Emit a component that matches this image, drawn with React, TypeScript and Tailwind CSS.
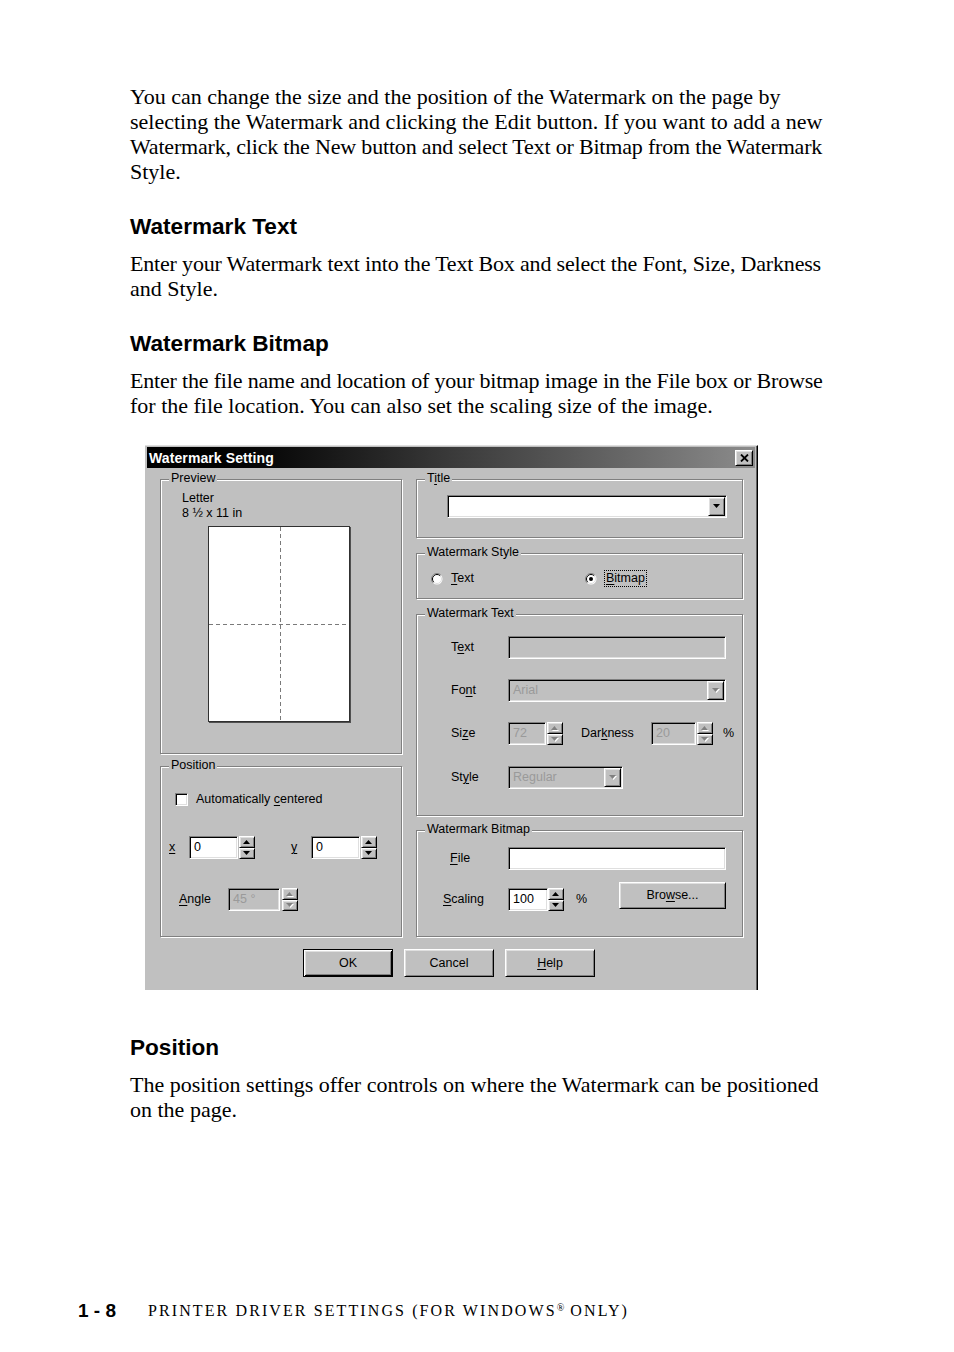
import React from "react";

const SERIF = "font-['Liberation_Serif','Times_New_Roman',serif]";
const SANS = "font-['Liberation_Sans',Arial,sans-serif]";

const sunkenCls =
  "border border-t-[#808080] border-l-[#808080] border-b-white border-r-white shadow-[inset_1px_1px_0_#000,inset_-1px_-1px_0_#dfdfdf]";
const raisedCls =
  "bg-[#c0c0c0] border border-t-white border-l-white border-b-black border-r-black shadow-[inset_1px_1px_0_#dfdfdf,inset_-1px_-1px_0_#808080]";

function U({ children }: { children: React.ReactNode }) {
  return <span className="underline underline-offset-[2px] decoration-1">{children}</span>;
}

function ArrowDown({ disabled }: { disabled?: boolean }) {
  return (
    <svg width="8" height="5" viewBox="0 0 8 5" className="block">
      {disabled && <polygon points="1,1 8,1 4.5,5" fill="#ffffff" />}
      <polygon points="0,0 7,0 3.5,4" fill={disabled ? "#808080" : "#000000"} />
    </svg>
  );
}

function ArrowUp({ disabled }: { disabled?: boolean }) {
  return (
    <svg width="8" height="5" viewBox="0 0 8 5" className="block">
      {disabled && <polygon points="1,5 8,5 4.5,1" fill="#ffffff" />}
      <polygon points="0,4 7,4 3.5,0" fill={disabled ? "#808080" : "#000000"} />
    </svg>
  );
}

function Edit({ wCls, value, disabled }: { wCls: string; value?: string; disabled?: boolean }) {
  return (
    <div
      className={`${wCls} h-[23px] flex items-center pl-[4px] ${sunkenCls} ${
        disabled ? "bg-[#c0c0c0] text-[#9a9a9a]" : "bg-white text-black"
      }`}
    >
      {value}
    </div>
  );
}

function Combo({ wCls, value, disabled }: { wCls: string; value?: string; disabled?: boolean }) {
  return (
    <div className={`${wCls} h-[23px] flex p-[1px] ${sunkenCls} ${disabled ? "bg-[#c0c0c0]" : "bg-white"}`}>
      <div className={`flex-1 flex items-center pl-[3px] ${disabled ? "text-[#9a9a9a]" : "text-black"}`}>{value}</div>
      <div className={`w-[17px] flex items-center justify-center ${raisedCls}`}>
        <ArrowDown disabled={disabled} />
      </div>
    </div>
  );
}

function Spin({ disabled }: { disabled?: boolean }) {
  return (
    <div className="w-[16px] h-[23px] flex flex-col">
      <div className={`h-[12px] flex items-center justify-center ${raisedCls}`}>
        <ArrowUp disabled={disabled} />
      </div>
      <div className={`h-[11px] flex items-center justify-center ${raisedCls}`}>
        <ArrowDown disabled={disabled} />
      </div>
    </div>
  );
}

function Btn({ wCls, hCls, children, def }: { wCls: string; hCls: string; children: React.ReactNode; def?: boolean }) {
  const cls = def
    ? "bg-[#c0c0c0] border border-black shadow-[inset_1px_1px_0_#fff,inset_-1px_-1px_0_#000,inset_2px_2px_0_#dfdfdf,inset_-2px_-2px_0_#808080]"
    : raisedCls;
  return <div className={`${wCls} ${hCls} flex items-center justify-center ${cls}`}>{children}</div>;
}

function Check() {
  return <div className={`w-[13px] h-[13px] bg-white ${sunkenCls}`} />;
}

function Radio({ checked }: { checked?: boolean }) {
  return (
    <svg width="12" height="12" viewBox="0 0 12 12" className="block">
      <circle cx="6" cy="6" r="5.5" fill="#ffffff" />
      <path d="M 2.1 9.9 A 5.5 5.5 0 0 1 9.9 2.1" fill="none" stroke="#808080" strokeWidth="1" />
      <circle cx="6" cy="6" r="4.5" fill="#ffffff" />
      <path d="M 2.8 9.2 A 4.5 4.5 0 0 1 9.2 2.8" fill="none" stroke="#000000" strokeWidth="1" />
      <path d="M 2.8 9.2 A 4.5 4.5 0 0 0 9.2 2.8" fill="none" stroke="#dfdfdf" strokeWidth="1" />
      {checked && <circle cx="6" cy="6" r="2" fill="#000000" />}
    </svg>
  );
}

function Group({ label, cls, children }: { label: React.ReactNode; cls: string; children?: React.ReactNode }) {
  return (
    <div className={`relative border border-[#808080] shadow-[1px_1px_0_#fff,inset_1px_1px_0_#fff] ${cls}`}>
      <span className="absolute left-[8px] top-[-9px] px-[2px] bg-[#c0c0c0] leading-[15px] whitespace-nowrap">
        {label}
      </span>
      {children}
    </div>
  );
}

function Row({ label, lwCls, children }: { label: React.ReactNode; lwCls: string; children: React.ReactNode }) {
  return (
    <div className="flex items-center h-[23px]">
      <span className={lwCls}>{label}</span>
      {children}
    </div>
  );
}

function Dialog() {
  return (
    <div
      className={`${SANS} text-[12.5px] leading-[15px] text-black w-[613px] h-[545px] bg-[#c0c0c0] border-t border-t-[#dfdfdf] border-r border-r-black shadow-[inset_-1px_0_0_#606060] pt-[1px]`}
    >
      {/* title bar */}
      <div className="ml-[2px] mr-[2px] h-[21px] bg-linear-to-r from-black via-[#3a3a3a] to-[#8c8c8c] flex items-center justify-between pl-[2px]">
        <span className="text-white font-bold text-[14px] leading-[16px] tracking-[0.1px]">Watermark Setting</span>
        <div className={`w-[18px] h-[16px] mr-[2px] flex items-center justify-center ${raisedCls}`}>
          <svg width="9" height="8" viewBox="0 0 9 8" className="block">
            <path d="M1 0.5 L8 7.5 M8 0.5 L1 7.5" stroke="#000" strokeWidth="1.8" />
          </svg>
        </div>
      </div>

      {/* body */}
      <div className="flex gap-[14px] pl-[15px] mt-[11px]">
        {/* left column */}
        <div className="flex flex-col">
          <Group label="Preview" cls="w-[242px] h-[275px]">
            <div className="pl-[21px] pt-[11px]">
              <div>Letter</div>
              <div>8 ½ x 11 in</div>
            </div>
            <div className="ml-[47px] mt-[5px] w-[142px] h-[196px] bg-white border border-[#303030] shadow-[1px_1px_0_#505050]">
              <svg width="140" height="194" viewBox="0 0 140 194" className="block">
                <line x1="71.5" y1="0" x2="71.5" y2="194" stroke="#7a7a7a" strokeWidth="1" strokeDasharray="4 3" />
                <line x1="0" y1="97.5" x2="140" y2="97.5" stroke="#7a7a7a" strokeWidth="1" strokeDasharray="4 3" />
              </svg>
            </div>
          </Group>

          <Group label="Position" cls="w-[242px] h-[171px] mt-[12px]">
            <div className="pl-[14px] pt-[25px] flex items-center">
              <Check />
              <span className="ml-[8px]">
                Automatically <U>c</U>entered
              </span>
            </div>
            <div className="flex items-center mt-[29px] pl-[8px]">
              <span className="w-[20px]">
                <U>x</U>
              </span>
              <Edit wCls="w-[49px]" value="0" />
              <div className="ml-[1px]">
                <Spin />
              </div>
              <span className="ml-[36px] w-[20px]">
                <U>y</U>
              </span>
              <Edit wCls="w-[49px]" value="0" />
              <div className="ml-[1px]">
                <Spin />
              </div>
            </div>
            <div className="flex items-center mt-[29px] pl-[18px]">
              <span className="w-[49px]">
                <U>A</U>ngle
              </span>
              <Edit wCls="w-[52px]" value="45 °" disabled />
              <div className="ml-[2px]">
                <Spin disabled />
              </div>
            </div>
          </Group>
        </div>

        {/* right column */}
        <div className="flex flex-col">
          <Group
            label={
              <>
                T<U>i</U>tle
              </>
            }
            cls="w-[327px] h-[59px]"
          >
            <div className="pl-[30px] pt-[15px]">
              <Combo wCls="w-[280px]" value="" />
            </div>
          </Group>

          <Group label="Watermark Style" cls="w-[327px] h-[46px] mt-[15px]">
            <div className="flex items-center h-[19px] mt-[15px] pl-[14px]">
              <div className="w-[154px] flex items-center">
                <Radio />
                <span className="ml-[8px]">
                  <U>T</U>ext
                </span>
              </div>
              <Radio checked />
              <span className="ml-[7px] px-[1px] border border-dotted border-black leading-[15px]">
                <U>B</U>itmap
              </span>
            </div>
          </Group>

          <Group label="Watermark Text" cls="w-[327px] h-[202px] mt-[15px]">
            <div className="pt-[21px] pl-[34px]">
              <Row
                lwCls="w-[57px]"
                label={
                  <>
                    T<U>e</U>xt
                  </>
                }
              >
                <Edit wCls="w-[218px]" disabled />
              </Row>
              <div className="mt-[20px]">
                <Row
                  lwCls="w-[57px]"
                  label={
                    <>
                      Fo<U>n</U>t
                    </>
                  }
                >
                  <Combo wCls="w-[218px]" value="Arial" disabled />
                </Row>
              </div>
              <div className="mt-[20px]">
                <Row
                  lwCls="w-[57px]"
                  label={
                    <>
                      Si<U>z</U>e
                    </>
                  }
                >
                  <Edit wCls="w-[38px]" value="72" disabled />
                  <div className="ml-[1px]">
                    <Spin disabled />
                  </div>
                  <span className="ml-[18px] w-[70px]">
                    Dar<U>k</U>ness
                  </span>
                  <Edit wCls="w-[45px]" value="20" disabled />
                  <div className="ml-[1px]">
                    <Spin disabled />
                  </div>
                  <span className="ml-[10px]">%</span>
                </Row>
              </div>
              <div className="mt-[21px]">
                <Row
                  lwCls="w-[57px]"
                  label={
                    <>
                      St<U>y</U>le
                    </>
                  }
                >
                  <Combo wCls="w-[115px]" value="Regular" disabled />
                </Row>
              </div>
            </div>
          </Group>

          <Group label="Watermark Bitmap" cls="w-[327px] h-[107px] mt-[14px]">
            <div className="pt-[16px] pl-[33px]">
              <Row
                lwCls="w-[58px]"
                label={
                  <>
                    <U>F</U>ile
                  </>
                }
              >
                <Edit wCls="w-[218px]" />
              </Row>
            </div>
            <div className="flex items-start mt-[12px] pl-[26px]">
              <div className="flex items-center h-[23px] mt-[6px]">
                <span className="w-[65px]">
                  <U>S</U>caling
                </span>
                <Edit wCls="w-[40px]" value="100" />
                <Spin />
                <span className="ml-[12px] w-[43px]">%</span>
              </div>
              <Btn wCls="w-[107px]" hCls="h-[27px]">
                <span>
                  Bro<U>w</U>se...
                </span>
              </Btn>
            </div>
          </Group>
        </div>
      </div>

      {/* buttons */}
      <div className="flex gap-[11px] mt-[12px] pl-[158px]">
        <Btn wCls="w-[90px]" hCls="h-[28px]" def>
          OK
        </Btn>
        <Btn wCls="w-[90px]" hCls="h-[28px]">
          Cancel
        </Btn>
        <Btn wCls="w-[90px]" hCls="h-[28px]">
          <span>
            <U>H</U>elp
          </span>
        </Btn>
      </div>
    </div>
  );
}

type Line = { t: string; tight?: boolean };

function Para({ lines, cls }: { lines: Line[]; cls?: string }) {
  return (
    <div className={`${SERIF} text-[22px] leading-[25px] text-black ${cls ?? ""}`}>
      {lines.map((l, i) => (
        <div key={i} className={`whitespace-nowrap ${l.tight ? "tracking-[-0.18px]" : ""}`}>
          {l.t}
        </div>
      ))}
    </div>
  );
}

function Heading({ children, cls }: { children: React.ReactNode; cls?: string }) {
  return <div className={`${SANS} font-bold text-[22.6px] leading-[26px] text-black ${cls ?? ""}`}>{children}</div>;
}

export default function App() {
  return (
    <div className="w-[954px] h-[1352px] bg-white overflow-hidden">
      <div className="pl-[130px] pt-[84px]">
        <Para
          lines={[
            { t: "You can change the size and the position of the Watermark on the page by" },
            { t: "selecting the Watermark and clicking the Edit button. If you want to add a new" },
            { t: "Watermark, click the New button and select Text or Bitmap from the Watermark", tight: true },
            { t: "Style." },
          ]}
        />
        <Heading cls="mt-[30px]">Watermark Text</Heading>
        <Para
          cls="mt-[11px]"
          lines={[
            { t: "Enter your Watermark text into the Text Box and select the Font, Size, Darkness", tight: true },
            { t: "and Style." },
          ]}
        />
        <Heading cls="mt-[30px]">Watermark Bitmap</Heading>
        <Para
          cls="mt-[11px]"
          lines={[
            { t: "Enter the file name and location of your bitmap image in the File box or Browse", tight: true },
            { t: "for the file location. You can also set the scaling size of the image." },
          ]}
        />
        <div className="mt-[27px] ml-[15px]">
          <Dialog />
        </div>
        <Heading cls="mt-[45px]">Position</Heading>
        <Para
          cls="mt-[11px]"
          lines={[
            { t: "The position settings offer controls on where the Watermark can be positioned" },
            { t: "on the page." },
          ]}
        />
      </div>
      <div className="pl-[78px] mt-[179px] flex items-center h-[20px]">
        <span className={`${SANS} font-bold text-[19px] leading-[20px] w-[70px] whitespace-pre`}>1 - 8</span>
        <span className={`${SERIF} text-[16px] leading-[20px] tracking-[2.1px] whitespace-nowrap`}>
          PRINTER DRIVER SETTINGS (FOR WINDOWS<sup className="text-[10px] tracking-normal">®</sup> ONLY)
        </span>
      </div>
    </div>
  );
}
